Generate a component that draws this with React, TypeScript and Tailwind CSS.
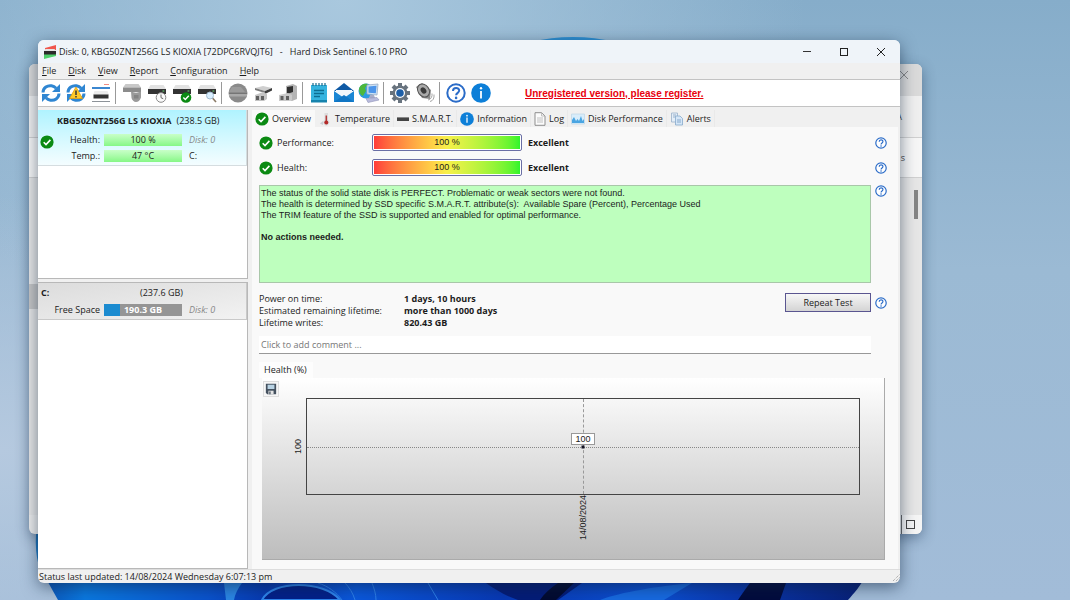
import type { ReactNode } from 'react'

interface Tab {
    name: string
    icon: ReactNode
}

interface Tool {
    name: string
    icon: ReactNode
}

function CheckIcon() {
    return (
        <svg viewBox="0 0 14 14" className="size-3.5 shrink-0">
            <circle cx="7" cy="7" r="6.6" fill="#0b8a13" />
            <path d="M3.7 7.2 6 9.5 10.4 4.9" fill="none" stroke="#fff" strokeWidth="1.6" />
        </svg>
    )
}

function InfoIcon({ className = 'size-3.5' }: { className?: string }) {
    return (
        <svg viewBox="0 0 20 20" className={`shrink-0 ${className}`}>
            <circle cx="10" cy="10" r="9.8" fill="#0d7fd8" />
            <circle cx="10" cy="5.2" r="1.2" fill="#fff" />
            <path d="M10 8v7.5" stroke="#fff" strokeWidth="1.8" />
        </svg>
    )
}

function HelpIcon({ className = 'size-3' }: { className?: string }) {
    return (
        <svg viewBox="0 0 20 20" className={`shrink-0 ${className}`}>
            <circle cx="10" cy="10" r="8.7" fill="#fff" stroke="#2b6cc8" strokeWidth="2" />
            <path d="M7 8c0-4 6.2-4 6.2-.4 0 2.2-3.1 2.3-3.1 4.7" fill="none" stroke="#2b6cc8" strokeWidth="2" />
            <circle cx="10.1" cy="14.9" r="1.3" fill="#2b6cc8" />
        </svg>
    )
}

function RefreshIcon({ warning = false }: { warning?: boolean }) {
    return (
        <svg viewBox="0 0 20 20" className="size-5">
            <path d="M2 9.5C2.2 4.5 6.5 2.2 10.5 2.8c2 .3 3.5 1.2 4.7 2.4" fill="none" stroke="#2f86d2" strokeWidth="3" />
            <path d="M19 1v8h-8z" fill="#2f86d2" />
            <path d="M18 10.5c-.2 5-4.5 7.3-8.5 6.7-2-.3-3.5-1.2-4.7-2.4" fill="none" stroke="#2f86d2" strokeWidth="3" />
            <path d="M1 19v-8h8z" fill="#2f86d2" />
            {warning && (
                <>
                    <path d="M10 4 16.5 15.5h-13z" fill="#ffc928" stroke="#e0a010" strokeWidth=".8" />
                    <path d="M10 7.5V12M10 13v1.5" stroke="#333" strokeWidth="1.5" />
                </>
            )}
        </svg>
    )
}

function DriveShape() {
    return (
        <>
            <path d="M3.5 2h13L19 6H1z" fill="#e2e2e2" />
            <path d="M1 6h18v5H1z" fill="#333" />
            <path d="M15.5 8h1.8" stroke="#6be07a" />
        </>
    )
}

function DriveListIcon() {
    return (
        <svg viewBox="0 0 20 20" className="size-5">
            <path d="M1 5h18" stroke="#3b87d0" strokeWidth="2" />
            <path d="M13 1.5h5" stroke="#ef8d83" />
            <path d="M3.5 8h13l1.5 4H2z" fill="#ececec" />
            <path d="M2.5 11.500h15v4h-15z" fill="#333" />
            <path d="M1 18.5h18" stroke="#8d9399" />
        </svg>
    )
}

function DriveStopIcon() {
    return (
        <svg viewBox="0 0 20 20" className="size-5">
            <path d="M3.5 1h13L19 4.500H1z" fill="#c8c8c8" />
            <path d="M1 4.5h18V10l-3-1H1z" fill="#8c8c8c" />
            <path d="M9 8.5c3 1.5 7 1.5 10 0v6c-1 3-3 4.500-5 4.500s-4-2-4.500-4z" fill="#9a9a9a" />
            <path d="M12 12h4.5v3.500H12z" fill="#848484" />
        </svg>
    )
}

function DriveClockIcon() {
    return (
        <svg viewBox="0 0 20 20" className="size-5">
            <DriveShape />
            <circle cx="14" cy="14.5" r="4.8" fill="#fafafa" stroke="#888" />
            <path d="M14 11.500v3.200l2.200 1" fill="none" stroke="#666" />
        </svg>
    )
}

function DriveCheckIcon() {
    return (
        <svg viewBox="0 0 20 20" className="size-5">
            <DriveShape />
            <circle cx="14" cy="14.5" r="5.3" fill="#0b8a13" />
            <path d="m11.3 14.600 2 1.900 3.500-3.700" fill="none" stroke="#fff" strokeWidth="1.4" />
        </svg>
    )
}

function DriveSearchIcon() {
    return (
        <svg viewBox="0 0 20 20" className="size-5">
            <DriveShape />
            <path d="m15 14.5 4 4.500" stroke="#8a7a66" strokeWidth="1.6" />
            <circle cx="13" cy="12.5" r="3.5" fill="#d9efff" stroke="#a3bdd2" />
        </svg>
    )
}

function GlobeOffIcon() {
    return (
        <svg viewBox="0 0 20 20" className="size-5">
            <circle cx="10" cy="10" r="9.5" fill="#8a8a8a" />
            <path d="M4 4h9l4 5H1z" fill="#9b9b9b" />
            <path d="M1 11h18v2.500H1z" fill="#a9a9a9" />
            <path d="M1 10.5h18" stroke="#757575" />
        </svg>
    )
}

function DriveLinkIcon() {
    return (
        <svg viewBox="0 0 20 20" className="size-5">
            <path d="m2 5 8-2 9 2-7 3z" fill="#cfcfcf" />
            <path d="m2 5 10 3v2L2 7z" fill="#7c7c7c" />
            <path d="m12 8 7-3v2.500L12 11z" fill="#3c3c3c" />
            <path d="m2 12 8-3 4 2v5l-3 2H2z" fill="#c4c4c4" />
            <path d="M3 13h3v4H3zM8 13h3v4H8z" fill="#5f5f5f" />
        </svg>
    )
}

function DriveBoxIcon() {
    return (
        <svg viewBox="0 0 20 20" className="size-5">
            <path d="m8 3 7-2 4 2v13l-5 2-6-2z" fill="#b4b4b4" />
            <path d="m9 4 6-1v6l-6 2z" fill="#2f2f2f" />
            <path d="m1 12 9-2 4 2v5l-3 1H1z" fill="#c9c9c9" />
            <path d="M2.5 13h3v4h-3zM8 13h3v4H8z" fill="#5f5f5f" />
        </svg>
    )
}

function NotepadIcon() {
    return (
        <svg viewBox="0 0 20 20" className="size-5">
            <path d="M2 2h16v17H2z" fill="#35b4df" />
            <path d="M2 17h16v2.500H2z" fill="#1683ad" />
            <path d="M4 0v3M7 0v3M10 0v3M13 0v3M16 0v3" stroke="#176a8d" strokeWidth="1.2" />
            <path d="M5 7.5h10M5 10.5h10M5 13.5h6" stroke="#0c6e92" strokeWidth="1.4" />
        </svg>
    )
}

function MailIcon() {
    return (
        <svg viewBox="0 0 22 20" className="h-5 w-[22px]">
            <path d="M1 8 11 0l10 8z" fill="#0f5aa5" />
            <path d="M3 7h16v6l-8 4-8-4z" fill="#f2f7fb" />
            <path d="m1 8 10 7 10-7v11H1z" fill="#1a86d4" />
            <path d="m1 19 10-7 10 7z" fill="#1176c4" />
        </svg>
    )
}

function NetworkIcon() {
    return (
        <svg viewBox="0 0 22 20" className="h-5 w-[22px]">
            <circle cx="8" cy="8" r="7.5" fill="#2c9ae0" />
            <path d="M1 6c1-5 6-6 9-5L7 5l1 3-3 5C2 12 1 9 1 6z" fill="#4cb83c" />
            <path d="m9 2 11-1-1 11-10-1z" fill="#cfe3f5" stroke="#9aabc4" strokeWidth=".8" />
            <path d="m10.5 3.500 8-.7-.7 7.500-7.300-.5z" fill="#4d95ea" />
            <path d="M12 12h4l1 3h-6z" fill="#a7adc8" />
            <path d="m8 15.5 11-1 2 2.500-11 2.500z" fill="#b9bbdc" stroke="#8f92b8" strokeWidth=".6" />
        </svg>
    )
}

function GearIcon() {
    return (
        <svg viewBox="0 0 20 20" className="size-5">
            <g stroke="#68737e" strokeWidth="4">
                <path d="M10 0v20M0 10h20M3 3l14 14M17 3 3 17" />
            </g>
            <circle cx="10" cy="10" r="7.5" fill="#68737e" />
            <circle cx="10" cy="10" r="5" fill="#fff" />
            <circle cx="10" cy="10" r="3.8" fill="#1d5fa8" />
        </svg>
    )
}

function SpeakerIcon() {
    return (
        <svg viewBox="0 0 20 20" className="size-5">
            <path d="m1 4 6-4 9 7-1 9-8-1z" fill="#8b8b8b" />
            <ellipse cx="8.5" cy="7.5" rx="5.5" ry="7" transform="rotate(-35 8.5 7.5)" fill="#aaa" stroke="#555" />
            <ellipse cx="8.5" cy="7.5" rx="2.5" ry="3.5" transform="rotate(-35 8.5 7.5)" fill="#3b3b3b" />
            <path d="M13 17c3-.5 4.5-3.500 4-6.500M15 18.500c3-.5 4.500-3.500 4-7" fill="none" stroke="#a5a5a5" />
        </svg>
    )
}

function AppIcon() {
    return (
        <svg viewBox="0 0 14 14" className="size-3.5 shrink-0">
            <path d="M2 3 13 0v5H2z" fill="#f0564c" />
            <path d="M1 9h12v2L1 14z" fill="#4fd06b" />
            <path d="M2.5 4h9L13 6H1z" fill="#e3e3e3" />
            <path d="M1 6h12v3.500H1z" fill="#2b2b2b" />
        </svg>
    )
}

function ThermometerIcon() {
    return (
        <svg viewBox="0 0 14 14" className="size-3.5">
            <path d="M2 11.5 5 9v4z" fill="#c9ced4" />
            <path d="M6.5 1H10v7a3 3 0 1 1-3.5 0z" fill="#dcdcdc" />
            <path d="M8.3 3.500v6" stroke="#b33a3a" strokeWidth="1.5" />
            <circle cx="8.3" cy="10.5" r="2" fill="#b32a2a" />
        </svg>
    )
}

function LogIcon() {
    return (
        <svg viewBox="0 0 12 14" className="h-3.5 w-3">
            <path d="M1 .7h6.500L11 4v9.300H1z" fill="#fbfbfb" stroke="#8e8e8e" />
            <path d="M7.5 1v3H11M3 6h6M3 8h6M3 10h6" fill="none" stroke="#b3b3b3" strokeWidth=".8" />
        </svg>
    )
}

function PerformanceIcon() {
    return (
        <svg viewBox="0 0 14 12" className="h-3 w-3.5">
            <path d="M.5 1h13v10H.5z" fill="#d8edfb" stroke="#c2d8e8" strokeWidth=".8" />
            <path d="M1 10V7l2-3 2 4 1.500-2L8 8l2-5 1.500 5L13 6v4z" fill="#4aa5e2" />
        </svg>
    )
}

function AlertsIcon() {
    return (
        <svg viewBox="0 0 14 14" className="size-3.5">
            <path d="M1.5 1h6v9h-6z" fill="#e4eef8" stroke="#9ab1ca" strokeWidth=".8" />
            <path d="M3 3h3M3 5h2" stroke="#9ab1ca" />
            <path d="M5.5 4H10l2.500 2.500V13h-7z" fill="#d5e6f7" stroke="#86a9cc" strokeWidth=".8" />
            <path d="M7 8h4M7 10h4" stroke="#86a9cc" />
        </svg>
    )
}

function SaveIcon() {
    return (
        <svg viewBox="0 0 14 14" className="size-3">
            <path d="M1 1h12v12H2.500L1 11.500z" fill="#44515f" />
            <path d="M3 2h8v5H3z" fill="#b9d3e4" />
            <path d="M4 9h6v4H4z" fill="#e4e4e4" />
            <path d="M5 10h1.500v3H5z" fill="#44515f" />
        </svg>
    )
}

const menuItems = ['File', 'Disk', 'View', 'Report', 'Configuration', 'Help']

const toolGroups: Tool[][] = [
    [
        { name: 'Refresh', icon: <RefreshIcon /> },
        { name: 'Refresh all', icon: <RefreshIcon warning /> },
        { name: 'Drive list', icon: <DriveListIcon /> },
    ],
    [
        { name: 'Hardware self test', icon: <DriveStopIcon /> },
        { name: 'Short self test', icon: <DriveClockIcon /> },
        { name: 'Extended self test', icon: <DriveCheckIcon /> },
        { name: 'Surface test', icon: <DriveSearchIcon /> },
    ],
    [
        { name: 'Offline disk', icon: <GlobeOffIcon /> },
        { name: 'Connect disk', icon: <DriveLinkIcon /> },
        { name: 'Eject disk', icon: <DriveBoxIcon /> },
    ],
    [
        { name: 'Save report', icon: <NotepadIcon /> },
        { name: 'Send report', icon: <MailIcon /> },
        { name: 'Network', icon: <NetworkIcon /> },
    ],
    [
        { name: 'Settings', icon: <GearIcon /> },
        { name: 'Sounds', icon: <SpeakerIcon /> },
    ],
    [
        { name: 'Help', icon: <HelpIcon className="size-5" /> },
        { name: 'About', icon: <InfoIcon className="size-5" /> },
    ],
]

const tabs: Tab[] = [
    { name: 'Temperature', icon: <ThermometerIcon /> },
    { name: 'S.M.A.R.T.', icon: <span className="h-1 w-3 border-t border-[#888] bg-[#444]" /> },
    { name: 'Information', icon: <InfoIcon /> },
    { name: 'Log', icon: <LogIcon /> },
    { name: 'Disk Performance', icon: <PerformanceIcon /> },
    { name: 'Alerts', icon: <AlertsIcon /> },
]

const ratings = ['Performance:', 'Health:']

const stats = [
    { label: 'Power on time:', value: '1 days, 10 hours' },
    { label: 'Estimated remaining lifetime:', value: 'more than 1000 days' },
    { label: 'Lifetime writes:', value: '820.43 GB' },
]

function Wallpaper() {
    return (
        <svg
            viewBox="0 0 1070 600"
            preserveAspectRatio="none"
            className="absolute inset-0 size-full"
        >
            <defs>
                <linearGradient id="petal" x1="0" x2="1">
                    <stop offset="0" stopColor="#0b55b8" />
                    <stop offset=".05" stopColor="#0a78e0" />
                    <stop offset=".2" stopColor="#0a52cc" />
                    <stop offset=".27" stopColor="#0739b0" />
                    <stop offset=".38" stopColor="#0a58dc" />
                    <stop offset=".56" stopColor="#0838b4" />
                    <stop offset=".74" stopColor="#0b4fd0" />
                    <stop offset=".84" stopColor="#0a38b0" />
                    <stop offset="1" stopColor="#071f74" />
                </linearGradient>
            </defs>
            <ellipse cx="573" cy="52" rx="56" ry="15" fill="#2d8fd2" />
            <path d="M38 520c-4 20-3 40 6 62h20v-62z" fill="#1e7ac4" />
            <path d="M44 575h822c-6 12-12 18-18 25H58z" fill="url(#petal)" />
            <path d="M224 583h18c-4 5-7 11-8 17h-8z" fill="#2b86e4" />
            <path d="M262 600c10-20 62-20 78 0z" fill="#03208a" stroke="#2f86ee" strokeWidth="2" />
            <path d="M318 583c10 3 18 9 24 17M345 583c4 4 8 10 10 17M372 583c2 5 4 11 4 17M428 583l10 17" fill="none" stroke="#2f80ea" />
            <path d="M486 583h96l-24 17h-40c-12-4-22-10-32-17z" fill="#041c78" />
            <path d="M540 600c4-6 10-12 18-17h16l-18 17z" fill="#020a30" />
            <path d="M600 600c20-8 60-14 92-17l-28 17z" fill="#1769e0" />
            <path d="M738 600c4-6 8-12 12-17h36l-6 17z" fill="#020b3d" />
        </svg>
    )
}

function BackWindow() {
    return (
        <div className="absolute top-16 right-[148px] bottom-[66px] left-[29px] flex flex-col items-end overflow-hidden rounded-md bg-[#ececec] shadow-[0_4px_14px_rgba(20,45,75,0.45)]">
            <div className="flex h-8 w-full items-start justify-end bg-[#dadada] pt-[7px] pr-3.5">
                <svg viewBox="0 0 8 8" className="size-2">
                    <path d="m0 0 8 8M8 0 0 8" stroke="#888" />
                </svg>
            </div>
            <div className="flex h-[42px] w-full items-center justify-end border-b border-[#d0d0d0] bg-[#efefef] pr-5 text-[#444]">
                A
            </div>
            <div className="flex h-10 w-full items-center justify-end border-b border-[#d0d0d0] bg-[#f6f6f6] pr-[17px] text-[#444]">
                s
            </div>
            <div className="flex w-full flex-1 items-start justify-between bg-[#e6e6e6]">
                <div className="mt-[106px] h-[25px] w-3 bg-[#c5c5c5]" />
                <div className="mt-3 mr-1 h-[29px] w-1 bg-[#858585]" />
            </div>
            <div className="flex h-[19px] w-[21px] items-center border-l border-[#666] bg-[#f5f5f5] pl-1">
                <div className="size-[9px] border border-[#444]" />
            </div>
        </div>
    )
}

function TitleBar() {
    return (
        <header className="flex h-[23px] items-center bg-[#eff4f9] pl-[5px]">
            <AppIcon />
            <h1 className="ml-0.5 flex-1 whitespace-pre">
                {'Disk: 0, KBG50ZNT256G LS KIOXIA [72DPC6RVQJT6]   -   Hard Disk Sentinel 6.10 PRO'}
            </h1>
            <div className="flex pr-px">
                <button aria-label="Minimize" className="flex w-[37px] justify-center">
                    <svg viewBox="0 0 8 8" className="size-2">
                        <path d="M0 3.5h8" stroke="#333" />
                    </svg>
                </button>
                <button aria-label="Maximize" className="flex w-[37px] justify-center">
                    <span className="size-2 border border-[#222]" />
                </button>
                <button aria-label="Close" className="flex w-[37px] justify-center">
                    <svg viewBox="0 0 8 8" className="size-2">
                        <path d="m0 0 8 8M8 0 0 8" stroke="#222" />
                    </svg>
                </button>
            </div>
        </header>
    )
}

function MenuBar() {
    return (
        <nav className="flex h-4 items-center gap-3 bg-[#f0f0f0] pl-1">
            {menuItems.map((item) => (
                <button key={item}>
                    <span className="underline">{item[0]}</span>
                    {item.slice(1)}
                </button>
            ))}
        </nav>
    )
}

function Toolbar() {
    return (
        <div className="flex h-7 items-center border-y border-[#c3c3c3] bg-white">
            {toolGroups.map((group, i) => (
                <div key={i} className="flex items-center">
                    {i > 0 && <span className="mr-[3px] ml-0.5 h-[22px] w-px bg-[#999]" />}
                    {group.map((tool) => (
                        <button key={tool.name} aria-label={tool.name} className="flex w-[25px] justify-center">
                            {tool.icon}
                        </button>
                    ))}
                </div>
            ))}
            <a
                href="#register"
                className="ml-8 font-['Liberation_Sans',sans-serif] text-[10px] font-bold text-[#e8000d] underline"
            >
                Unregistered version, please register.
            </a>
        </div>
    )
}

function Sidebar() {
    return (
        <aside className="flex w-[210px] shrink-0 flex-col gap-[3px]">
            <section className="h-[169px] border-r border-b border-[#b8b8b8] bg-white">
                <div className="flex h-14 flex-col border-r border-b border-[#d5dde0] bg-linear-to-b from-[#aff3ff] to-[#f4fdff]">
                    <h2 className="flex h-[21px] items-center gap-[5px] pl-[19px]">
                        <b>KBG50ZNT256G LS KIOXIA</b>
                        <span>(238.5 GB)</span>
                    </h2>
                    <div className="flex items-center pt-[3px]">
                        <div className="mx-0.5 -mt-3">
                            <CheckIcon />
                        </div>
                        <div className="grid flex-1 grid-cols-[44px_78px_1fr] items-center gap-x-1 gap-y-1 leading-3">
                            <span className="text-right">Health:</span>
                            <span className="h-3 bg-linear-to-b from-[#c8ffc8] to-[#86f786] text-center">100 %</span>
                            <span className="pl-[3px] text-[#888] italic">Disk: 0</span>
                            <span className="text-right">Temp.:</span>
                            <span className="h-3 bg-linear-to-b from-[#c8ffc8] to-[#86f786] text-center">47 °C</span>
                            <span className="pl-[3px]">C:</span>
                        </div>
                    </div>
                </div>
            </section>
            <section className="flex-1 border-t border-r border-b border-[#b8b8b8] bg-white">
                <div className="flex h-[37px] flex-col justify-between border-r border-b border-[#c9c9c9] bg-linear-to-br from-[#dcdcdc] to-[#f2f2f2] pt-1 pb-[3px] leading-3">
                    <div className="flex">
                        <b className="w-[102px] pl-[3px]">C:</b>
                        <span>(237.6 GB)</span>
                    </div>
                    <div className="grid grid-cols-[62px_78px_1fr] items-center gap-x-1">
                        <span className="text-right">Free Space</span>
                        <span className="h-3 bg-linear-to-r from-[#1b8bd0] from-20% to-[#959595] to-20% text-center font-bold text-white">
                            190.3 GB
                        </span>
                        <span className="pl-[3px] text-[#888] italic">Disk: 0</span>
                    </div>
                </div>
            </section>
        </aside>
    )
}

function TabBar() {
    return (
        <div role="tablist" className="flex h-[17px] items-center bg-[#f0f0f0]">
            <button
                role="tab"
                aria-selected="true"
                className="flex h-full items-center gap-[3px] bg-[#f9f9f9] pr-1 pl-[3px]"
            >
                <CheckIcon />
                Overview
            </button>
            {tabs.map((tab) => (
                <button
                    key={tab.name}
                    role="tab"
                    aria-selected="false"
                    className="flex h-full items-center gap-[3px] border-r border-[#e9e9e9] px-[3px]"
                >
                    {tab.icon}
                    {tab.name}
                </button>
            ))}
        </div>
    )
}

function HelpButton() {
    return (
        <button aria-label="Help" className="ml-1 shrink-0">
            <HelpIcon />
        </button>
    )
}

function HealthChart() {
    return (
        <section className="mr-0.5 flex min-h-0 flex-1 flex-col">
            <h3 className="w-[54px] bg-[#fdfdfd] pl-[5px] leading-4">Health (%)</h3>
            <div className="ml-[3px] flex flex-1 flex-col border-r border-b border-[#aaa] bg-linear-to-b from-white to-[#bdbdbd] pr-6">
                <button
                    aria-label="Save chart"
                    className="mt-[3px] ml-px flex size-4 items-center justify-center border border-[#ddd] bg-[#f6f6f6]"
                >
                    <SaveIcon />
                </button>
                <div className="mt-px ml-[30px] flex flex-1">
                    <span className="flex w-3.5 rotate-180 items-center justify-center font-['Liberation_Sans',sans-serif] [writing-mode:vertical-rl]">
                        100
                    </span>
                    <div className="relative flex-1 border border-[#444]">
                        <div className="absolute inset-x-0 top-1/2 border-t border-dotted border-[#888]" />
                        <div className="absolute inset-y-0 left-1/2 border-l border-dashed border-[#999]" />
                        <div className="absolute top-1/2 left-1/2 size-[3px] -translate-1/2 bg-[#112]" />
                        <div className="absolute bottom-1/2 left-1/2 mb-0.5 w-6 -translate-x-1/2 border border-[#999] bg-white text-center font-['Liberation_Sans',sans-serif] leading-[10px]">
                            100
                        </div>
                    </div>
                </div>
                <div className="ml-11 flex h-16 justify-center">
                    <span className="rotate-180 text-right font-['Liberation_Sans',sans-serif] leading-3 [writing-mode:vertical-rl]">
                        14/08/2024
                    </span>
                </div>
            </div>
        </section>
    )
}

function Overview() {
    return (
        <div className="flex min-h-0 flex-1 flex-col bg-[#f9f9f9] pt-[3px] pr-[11px] pb-[9px] pl-[7px]">
            {ratings.map((rating) => (
                <div key={rating} className="flex h-[25px] items-center">
                    <CheckIcon />
                    <span className="ml-1 w-[95px]">{rating}</span>
                    <div className="h-[17px] w-[150px] rounded-xs border border-[#6a6fa5] bg-white p-px">
                        <div className="h-full bg-linear-to-r from-[#ff3a3a] via-[#f7f04a] to-[#2cf52c] text-center font-['Liberation_Sans',sans-serif] leading-[13px]">
                            100 %
                        </div>
                    </div>
                    <b className="ml-1.5 flex-1">Excellent</b>
                    <HelpButton />
                </div>
            ))}
            <div className="mt-[5px] flex items-start">
                <div className="h-[98px] flex-1 border border-[#a9c7a9] bg-[#beffbe] px-px pt-0.5 font-['Liberation_Sans',sans-serif] leading-[11px] whitespace-pre-wrap">
                    <p>The status of the solid state disk is PERFECT. Problematic or weak sectors were not found.</p>
                    <p>
                        {'The health is determined by SSD specific S.M.A.R.T. attribute(s):  Available Spare (Percent), Percentage Used'}
                    </p>
                    <p>The TRIM feature of the SSD is supported and enabled for optimal performance.</p>
                    <p className="mt-[11px] font-bold">No actions needed.</p>
                </div>
                <HelpButton />
            </div>
            <div className="mt-2.5 flex items-start">
                <dl className="grid flex-1 grid-cols-[145px_1fr] leading-3">
                    {stats.map((stat) => (
                        <div key={stat.label} className="contents">
                            <dt>{stat.label}</dt>
                            <dd className="font-bold">{stat.value}</dd>
                        </div>
                    ))}
                </dl>
                <div className="flex items-center">
                    <button className="h-[19px] w-[86px] border border-[#5a5590] bg-linear-to-b from-[#f7f7f7] to-[#d4d4d4]">
                        Repeat Test
                    </button>
                    <HelpButton />
                </div>
            </div>
            <input
                aria-label="Comment"
                placeholder="Click to add comment ..."
                className="mt-[7px] mr-4 mb-2 h-[18px] border-b border-[#999] bg-white px-0.5 placeholder:text-[#777]"
            />
            <HealthChart />
        </div>
    )
}

export default function App() {
    return (
        <div className="relative h-screen overflow-hidden bg-[radial-gradient(ellipse_at_32%_0%,#a9c8de_0%,transparent_45%),radial-gradient(ellipse_at_0%_75%,#b5c9df_0%,transparent_40%),linear-gradient(180deg,#86adca_0%,#9bbad4_45%,#a2bcd8_100%)] font-['Open_Sans','Noto_Sans',sans-serif] text-[9px] text-[#1c1c1c]">
            <Wallpaper />
            <BackWindow />
            <main className="absolute top-10 right-[170px] bottom-[17px] left-[38px] flex flex-col overflow-hidden rounded-md bg-[#f0f0f0] shadow-[0_4px_16px_rgba(15,35,60,0.55)]">
                <TitleBar />
                <MenuBar />
                <Toolbar />
                <div className="flex min-h-0 flex-1 gap-1 pt-[3px] pr-0.5">
                    <Sidebar />
                    <div className="flex min-w-0 flex-1 flex-col">
                        <TabBar />
                        <Overview />
                    </div>
                </div>
                <footer className="flex h-3.5 items-center justify-between border-t border-[#ddd] pl-px">
                    Status last updated: 14/08/2024 Wednesday 6:07:13 pm
                    <svg viewBox="0 0 8 8" className="size-2">
                        <path d="m1 8 7-7M4 8l4-4" stroke="#999" strokeDasharray="1 1" />
                    </svg>
                </footer>
            </main>
        </div>
    )
}
